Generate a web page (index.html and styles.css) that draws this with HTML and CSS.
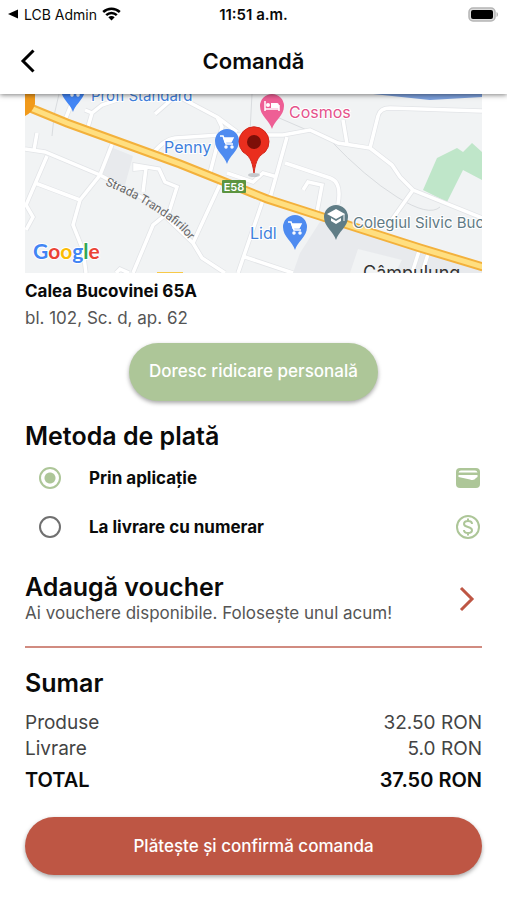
FILE: index.html
```html
<!DOCTYPE html>
<html lang="ro">
<head>
  <meta charset="UTF-8">
  <meta name="viewport" content="width=device-width, initial-scale=1">
  <title>Comandă</title>
  <link rel="stylesheet" href="styles.css">
</head>
<body>

  <header class="header">
    <div class="status-bar">
      <div class="status-left">
        <svg width="11" height="10" viewBox="0 0 11 10"><path d="M0 5 10 0.5v9z"/></svg>
        <span>LCB Admin</span>
        <svg class="wifi" width="19" height="14" viewBox="0 0 19 14">
          <path d="M1.200 5C5.900.5 13.100.5 17.800 5M4.200 8.200c3-2.900 7.600-2.900 10.600 0" fill="none" stroke="#000" stroke-width="2.500"/>
          <path d="M6.300 10.300c1.800-1.700 4.600-1.700 6.400 0L9.500 13.600z"/>
        </svg>
      </div>
      <span class="time">11:51 a.m.</span>
      <div class="status-right">
        <svg width="31" height="15" viewBox="0 0 31 15">
          <rect x="1" y="1" width="26" height="13" rx="4" fill="#ddd" stroke="#b5b5b5" stroke-width="1.500"/>
          <rect x="3" y="3" width="22" height="9" rx="2"/>
          <path d="M28.500 5c2 .8 2 4.200 0 5z" fill="#b5b5b5"/>
        </svg>
      </div>
    </div>
    <div class="app-bar">
      <button class="back" type="button" aria-label="Înapoi">
        <svg width="16" height="24" viewBox="0 0 16 24"><path d="M13.500 1.500 3 12 13.500 22.500" fill="none" stroke="#000" stroke-width="3"/></svg>
      </button>
      <h1>Comandă</h1>
    </div>
  </header>

  <main class="content">
    <svg class="map" viewBox="0 0 457 179" role="img" aria-label="Hartă">
      <defs>
        <path id="trandafirilor" d="M80 91C105 101 120 110 139 123S159 140 174 158"/>
        <path id="pin" d="M0 23C-2 15-12 10-12 0a12 12 0 0 1 24 0C12 10 2 15 0 23z"/>
        <g id="cart" fill="none" stroke="#fff" stroke-width="1.500">
          <path d="M-7-5h3L-1 3h7"/>
          <path d="M-3-3H6L4 1h-6z" fill="#fff"/>
          <circle cx="-1" cy="6" r="1"/>
          <circle cx="5" cy="6" r="1"/>
        </g>
        <g id="streets">
          <path d="M0 55 20 58 75 81 125 108 168 149 177 164 200 179"/>
          <path d="M88 48 75 81 55 106 48 131 58 156 61 179"/>
          <path d="M22 62 1 111 8 123 1 136M10 89 55 106M12 39 9 56"/>
          <path d="M38 31 48 6M63 33 67 19 60 16M67 19 77 11 92 6M130 20 146 6"/>
          <path d="M128 59C136 50 142 45 150 44L195 41 258 41 285 36 313 49 345 54 367 71 375 83 388 96 457 124"/>
          <path d="M345 54 353 22Q355 14 365 14L457 17M318 26 322 50M388 96 366 127"/>
          <path d="M158 5 192 23 197 33 185 79M192 23 212 38M262 43 245 104"/>
          <path d="M197 86 168 149M238 106 213 179M220 163 268 179"/>
          <path d="M260 69 305 84Q317 88 313 110M278 96 283 88 297 91 292 118"/>
          <path d="M202 79 228 88 238 79 252 83M118 98 121 74 110 75 110 71 134 75 140 88 152 93 144 118 128 131 108 179M91 179 95 175 104 179"/>
          <path d="M395 154 387 179M404 157 397 179"/>
        </g>
      </defs>

      <rect width="457" height="179" fill="#f1f3f4"/>
      <path d="M83 52 108 62 100 91 76 82zM300 120 457 174V179H268l7-20z" fill="#e8eaed"/>
      <path d="M333 155 377 166 370 179H325z" fill="#f1f3f4"/>
      <path d="M398 96 412 64 432 54 438 58 447 49 457 58V86L438 76 422 108z" fill="#bfe6c9"/>
      <path d="M348 0 405 6 457 3V0z" fill="#7b9fdc"/>
      <path d="M227 0 225 38M27 42Q28 20 34 0M245 20 305 46Q340 83 372 103T415 113" fill="none" stroke="#d9dcdf"/>
      <use href="#streets" fill="none" stroke="#e2e4e7" stroke-width="5"/>
      <use href="#streets" fill="none" stroke="#fff" stroke-width="3.500"/>

      <!-- E58 -->
      <g fill="none">
        <path d="M3 13 42 29 155 70 195 86 242 105 298 123 395 154 458 173" stroke="#f3b13c" stroke-width="9"/>
        <path d="M3 13 42 29 155 70 195 86 242 105 298 123 395 154 458 173" stroke="#ffdf80" stroke-width="5"/>
      </g>
      <path d="M0 0H10V10Q8 18 0 22z" fill="#f19a1b"/>
      <path d="M132 179v-1h26v1z" fill="#f7c948"/>
      <rect x="197" y="86" width="24" height="13" rx="1" fill="#5c9440"/>
      <text class="road-number" x="209" y="97" text-anchor="middle">E58</text>

      <text class="street"><textPath href="#trandafirilor">Strada Trandafirilor</textPath></text>

      <g class="place blue">
        <text class="long" x="66" y="7">Profi Standard</text>
        <text x="139" y="59">Penny</text>
        <text x="225" y="145">Lidl</text>
      </g>
      <text class="place pink" x="264" y="24">Cosmos</text>
      <text class="place slate long" x="328" y="134">Colegiul Silvic Buc</text>
      <text class="town" x="338" y="185">Câmpulung</text>

      <g transform="translate(48 -5)"><use href="#pin" fill="#4285f4"/><use href="#cart"/></g>
      <g transform="translate(202 47)"><use href="#pin" fill="#4e8bf0"/><use href="#cart"/></g>
      <g transform="translate(270 133)"><use href="#pin" fill="#4e8bf0"/><use href="#cart"/></g>
      <g transform="translate(247 12)">
        <use href="#pin" fill="#ee5f95"/>
        <path d="M-7-5V5M7-1V5M-7 3H7" stroke="#fff" stroke-width="1.500"/>
        <path d="M-1-3H5Q7-3 7 0V2H-1z" fill="#fff"/>
        <circle cx="-4" cy="-1" r="2" fill="#fff"/>
      </g>
      <g transform="translate(311 123)">
        <use href="#pin" fill="#607d86"/>
        <path d="M-9-3 0-8 9-3 0 2zM-5 1 0 4 5 1V4L0 7-5 4z" fill="#fff"/>
        <path d="M8-3V4" stroke="#fff"/>
      </g>

      <ellipse cx="229" cy="81" rx="6" ry="2" fill="#9aa0a6" opacity="0.5"/>
      <path d="M229 79C227 65 224 62 218 58A15 15 0 1 1 240 58C234 62 231 65 229 79z" fill="#ea2e1e" stroke="#d3261a"/>
      <circle cx="229" cy="48" r="7" fill="#7d0f08"/>

      <text class="google" x="8" y="165"><tspan fill="#4285f4">G</tspan><tspan fill="#ea4335">o</tspan><tspan fill="#fbbc05">o</tspan><tspan fill="#4285f4">g</tspan><tspan fill="#34a853">l</tspan><tspan fill="#ea4335">e</tspan></text>
    </svg>

    <div class="address">
      <p class="street-line">Calea Bucovinei 65A</p>
      <p class="details">bl. 102, Sc. d, ap. 62</p>
    </div>

    <button class="btn btn-pickup" type="button">Doresc ridicare personală</button>

    <h2>Metoda de plată</h2>
    <div class="payment">
      <label class="option">
        <input type="radio" name="payment" value="app" checked>
        <span>Prin aplicație</span>
        <svg width="26" height="26" viewBox="0 0 26 26">
          <rect x="1" y="3" width="24" height="20" rx="4" fill="#adc698"/>
          <path d="M3.500 7.500Q4 5.500 6 5.500H20Q22 5.500 22.500 7.500zM3.500 10H22.500V12L21 13Q19 16 15 14.500L3.500 12z" fill="#fff"/>
        </svg>
      </label>
      <label class="option">
        <input type="radio" name="payment" value="cash">
        <span>La livrare cu numerar</span>
        <svg width="26" height="26" viewBox="0 0 26 26" fill="none" stroke="#adc698" stroke-width="2">
          <circle cx="13" cy="13" r="11"/>
          <path d="M17 10C17 8 15 7 13 7S9 8 9 10 11 12.500 13 13 17 14 17 16.200 15 19 13 19 9 18 9 16M13 4.500V7.500M13 18.500V21.500"/>
        </svg>
      </label>
    </div>

    <a class="voucher" href="#voucher">
      <div>
        <h2>Adaugă voucher</h2>
        <p>Ai vouchere disponibile. Folosește unul acum!</p>
      </div>
      <svg width="16" height="26" viewBox="0 0 16 26"><path d="M2 2 13 13 2 24" fill="none" stroke="#be5644" stroke-width="3"/></svg>
    </a>

    <h2>Sumar</h2>
    <table class="summary">
      <tbody>
        <tr><th scope="row">Produse</th><td>32.50 RON</td></tr>
        <tr><th scope="row">Livrare</th><td>5.0 RON</td></tr>
      </tbody>
      <tfoot>
        <tr><th scope="row">TOTAL</th><td>37.50 RON</td></tr>
      </tfoot>
    </table>

    <button class="btn btn-pay" type="button">Plătește și confirmă comanda</button>
  </main>

</body>
</html>
```

FILE: styles.css
```css
* {
  box-sizing: border-box;
}

body {
  margin: 0;
  font-family: Inter, 'Liberation Sans', sans-serif;
  background-color: #fff;
  color: #0a0a0a;
}

h1, h2, p {
  margin: 0;
}

/* Header */
.header {
  position: sticky;
  top: 0;
  background-color: #fff;
  box-shadow: 0 1px 5px rgba(0, 0, 0, 0.5);
}

.status-bar {
  display: grid;
  grid-template-columns: 1fr auto 1fr;
  align-items: center;
  height: 28px;
  padding: 0 8px;
  font-size: 14px;
}

.status-left {
  display: flex;
  align-items: center;
  gap: 5px;
}

.time {
  font-size: 15px;
  font-weight: 600;
}

.status-right {
  display: flex;
  justify-content: flex-end;
}

.app-bar {
  display: grid;
  grid-template-columns: 56px 1fr 56px;
  align-items: center;
  height: 66px;
}

.back {
  display: flex;
  padding: 0 0 0 20px;
  border: none;
  background: none;
  cursor: pointer;
}

h1 {
  font-size: 22px;
  font-weight: 600;
  line-height: 30px;
  text-align: center;
}

/* Content */
.content {
  padding: 0 25px 25px;
}

.map {
  display: block;
  width: 100%;
}

.place {
  font-size: 16px;
  paint-order: stroke;
  stroke: #fff;
  stroke-width: 2px;
}

.long {
  font-size: 15px;
}

.blue {
  fill: #4080dc;
}

.pink {
  fill: #e5528b;
}

.slate {
  fill: #5f7a84;
}

.town {
  font-size: 18px;
  fill: #333;
}

.street {
  font-family: Roboto, sans-serif;
  font-size: 12px;
  fill: #666;
}

.road-number {
  font-size: 11px;
  font-weight: 600;
  fill: #fff;
}

.google {
  font-family: Lato, sans-serif;
  font-size: 21px;
  font-weight: 700;
  paint-order: stroke;
  stroke: #fff;
  stroke-width: 2px;
}

.address {
  margin-top: 5px;
  font-size: 17px;
  line-height: 27px;
}

.street-line {
  font-weight: 700;
}

.details {
  color: #555;
}

.btn {
  display: block;
  height: 58px;
  border: none;
  border-radius: 29px;
  color: #fff;
  font-family: inherit;
  font-size: 17px;
  font-weight: 500;
  box-shadow: 0 2px 4px rgba(0, 0, 0, 0.35);
  cursor: pointer;
}

.btn-pickup {
  margin: 11px auto 19px;
  padding: 0 20px 2px;
  background-color: #adc698;
}

.btn-pay {
  width: 100%;
  margin-top: 19px;
  background-color: #be5644;
}

h2 {
  font-size: 25px;
  font-weight: 600;
  line-height: 32px;
}

.payment {
  margin: 1px 0 20px;
}

.option {
  display: flex;
  align-items: center;
  height: 49px;
  padding: 0 1px 0 14px;
  font-size: 17px;
  font-weight: 700;
}

.option span {
  flex: 1;
  margin-left: 28px;
}

.option input {
  appearance: none;
  width: 22px;
  height: 22px;
  margin: 0;
  border: 2px solid #707070;
  border-radius: 50%;
}

.option input:checked {
  border-color: #adc698;
  background: radial-gradient(circle, #adc698 5px, #fff 6px);
}

.voucher {
  display: flex;
  align-items: center;
  justify-content: space-between;
  margin-bottom: 19px;
  padding: 0 7px 23px 0;
  border-bottom: 2px solid #d18b80;
  color: inherit;
  text-decoration: none;
}

.voucher svg {
  margin-top: 4px;
}

.voucher p {
  font-size: 17px;
  line-height: 20px;
  color: #555;
}

/* Summary */
.summary {
  width: 100%;
  margin-top: 11px;
  border-collapse: collapse;
  font-size: 19px;
  line-height: 26px;
  color: #444;
}

.summary th,
.summary td {
  padding: 0;
  font-weight: 400;
  text-align: left;
}

.summary td {
  text-align: right;
}

.summary tfoot th,
.summary tfoot td {
  font-size: 20px;
  line-height: 36px;
  font-weight: 600;
  color: #0a0a0a;
}
```
